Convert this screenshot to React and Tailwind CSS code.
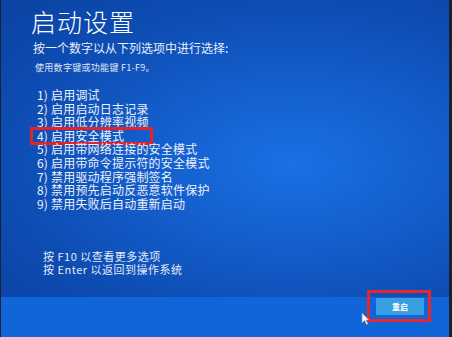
export default function App() {
  const items = [
    "1) 启用调试",
    "2) 启用启动日志记录",
    "3) 启用低分辨率视频",
    "4) 启用安全模式",
    "5) 启用带网络连接的安全模式",
    "6) 启用带命令提示符的安全模式",
    "7) 禁用驱动程序强制签名",
    "8) 禁用预先启动反恶意软件保护",
    "9) 禁用失败后自动重新启动",
  ];

  return (
    <div className="relative w-[452px] h-[337px] overflow-hidden flex flex-col border-l border-r-[3px] border-[#1a2030] font-['Noto_Sans_CJK_SC',sans-serif] text-white">
      {/* main screen */}
      <div className="flex-1 pl-[30px] pt-[6px] bg-[radial-gradient(ellipse_at_65%_55%,#1a70e4_0%,#145ecc_35%,#0d4cb2_70%,#0a43a2_100%)]">
        <div className="text-[25px] leading-[30px] font-light tracking-[1px]">启动设置</div>
        <div className="mt-[4px] ml-[2px] text-[12px] leading-[16px] text-[#e8eef8]">按一个数字以从下列选项中进行选择:</div>
        <div className="mt-[6px] ml-[4px] text-[9px] leading-[12px] tracking-[0.3px] text-[#e0e8f6]">使用数字键或功能键 F1-F9。</div>

        <div className="mt-[14px] ml-[6px] flex flex-col">
          {items.map((t, i) => (
            <div key={i} className="relative h-[13.6px] text-[12px] leading-[13.6px] tracking-[0.2px] text-[#eef2fa]">
              {t}
              {i === 3 && (
                <span className="absolute left-[-7px] top-[-2px] w-[123px] h-[18px] border-[3px] border-[#e3232c]" />
              )}
            </div>
          ))}
        </div>

        <div className="mt-[40px] ml-[12px] text-[11px] leading-[13px] tracking-[0.5px] text-[#e4eaf6]">
          <div>按 F10 以查看更多选项</div>
          <div>按 Enter 以返回到操作系统</div>
        </div>
      </div>

      {/* bottom bar */}
      <div className="relative h-[40px] bg-[#1066d8] flex justify-end items-start pr-[25px] pt-[1px]">
        <div className="w-[48px] h-[17px] bg-[#3a9ee2] flex items-center justify-center text-[8px] font-bold text-white">
          重启
        </div>
        <span className="absolute right-[18px] top-[-7px] w-[64px] h-[32px] border-[3px] border-[#e8262e]" />
        <svg className="absolute left-[360px] top-[15px]" width="9" height="13" viewBox="0 0 9 13">
          <path d="M1 1 L1 11 L3.5 8.5 L5.5 12.5 L7 11.8 L5 8 L8 8 Z" fill="#f4f6fa" stroke="#8a9ab8" strokeWidth="0.6" />
        </svg>
      </div>
    </div>
  );
}
